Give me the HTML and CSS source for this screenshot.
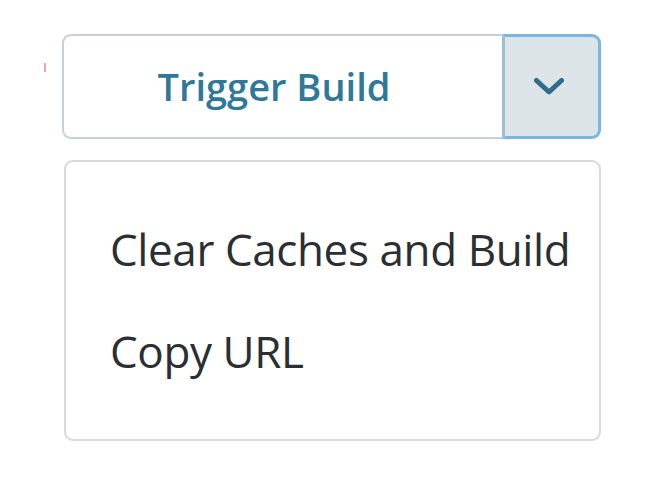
FILE: index.html
```html
<!DOCTYPE html>
<html>
<head>
<meta charset="utf-8">
<link rel="stylesheet" href="styles.css">
</head>
<body>
<div class="wrap">
  <span class="mark"></span>
  <div class="btn-group">
    <button class="btn-main">Trigger Build</button>
    <button class="btn-toggle" aria-label="More">
      <svg width="32" height="19" viewBox="0 0 32 19"><path d="M3.5 3.5 L16 15 L28.5 3.5" fill="none" stroke="#2f6d8c" stroke-width="5" stroke-linecap="round" stroke-linejoin="round"/></svg>
    </button>
  </div>
  <ul class="menu">
    <li class="item">Clear Caches and Build</li>
    <li class="item">Copy URL</li>
  </ul>
</div>
</body>
</html>
```
FILE: styles.css
```css
html, body {
  margin: 0;
  padding: 0;
  background: #ffffff;
}
.wrap {
  position: relative;
  padding: 34px 0 0 62px;
  font-family: "Open Sans", "Liberation Sans", sans-serif;
}
.mark {
  position: absolute;
  left: 44px;
  top: 63px;
  width: 2px;
  height: 9px;
  background: #f0a0bd;
}
.btn-group {
  display: flex;
  width: 539px;
  height: 105px;
}
.btn-main {
  box-sizing: border-box;
  width: 440px;
  height: 105px;
  border: 2px solid #c6d2db;
  border-right: none;
  border-radius: 9px 0 0 9px;
  background: #fff;
  color: #2f7898;
  font-family: "Open Sans", sans-serif;
  font-weight: 600;
  font-size: 38px;
  padding: 0 18px 2px 0;
}
.btn-toggle {
  box-sizing: border-box;
  width: 99px;
  height: 105px;
  border: 3px solid #7ab6e2;
  border-left: 3px solid #9fbfd6;
  border-radius: 0 9px 9px 0;
  background: #dde4e8;
  display: flex;
  align-items: center;
  justify-content: center;
  padding: 0 6px 0 0;
}
.menu {
  box-sizing: border-box;
  list-style: none;
  margin: 21px 0 0 2px;
  width: 537px;
  height: 281px;
  border: 2px solid #d9d9d9;
  border-radius: 9px;
  padding: 60px 0 0 44px;
}
.item {
  font-size: 44px;
  letter-spacing: -0.4px;
  color: #2b2f33;
  line-height: 54px;
  margin-bottom: 48px;
}
```
